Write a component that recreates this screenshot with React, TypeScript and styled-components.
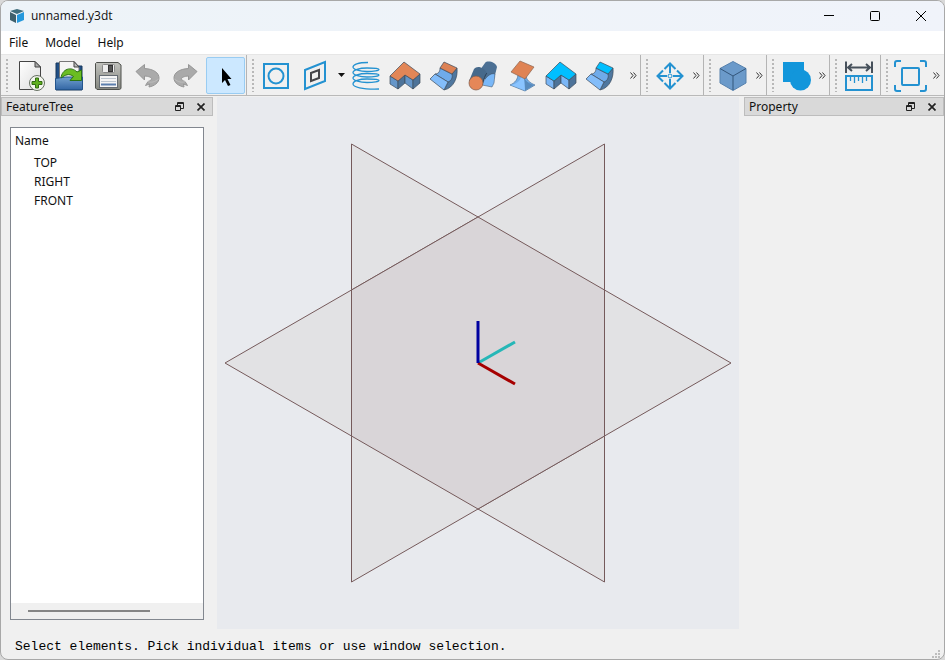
import React from "react";
import styled, { createGlobalStyle } from "styled-components";

const GlobalStyle = createGlobalStyle`
  * { box-sizing: border-box; }
  html, body { margin: 0; background: #d9d9d9; }
  body { font-family: "Noto Sans", "Open Sans", sans-serif; font-size: 12px; color: #111; }
  button { font: inherit; color: inherit; border: 0; padding: 0; background: none; }
  svg { display: block; }
`;

const Window = styled.div`
  display: flex;
  flex-direction: column;
  height: 100vh;
  min-height: 400px;
  border: 1px solid #a8a8a8;
  border-radius: 8px;
  overflow: hidden;
  background: #f0f0f0;
`;

const TitleBar = styled.header`
  display: flex;
  align-items: center;
  height: 30px;
  flex: none;
  padding-left: 8px;
  background: linear-gradient(90deg, #edf3f8, #f0f3fa);
`;

const Title = styled.h1`
  flex: 1;
  margin: 0 0 0 6px;
  font-family: "Open Sans", sans-serif;
  font-size: 12px;
  font-weight: 400;
  line-height: 30px;
`;

const CaptionButton = styled.button`
  display: grid;
  place-items: center;
  width: 46px;
  height: 30px;
`;

const MenuBar = styled.nav`
  display: flex;
  flex: none;
  height: 23px;
  gap: 17px;
  padding-left: 8px;
  background: #fff;
`;

const MenuButton = styled.button`
  font-size: 12px;
  line-height: 23px;
`;

const ToolStrip = styled.div`
  display: flex;
  flex: none;
  height: 42px;
  background: #f0f0f0;
  border-top: 1px solid #e6e6e6;
  border-bottom: 1px solid #b9b9b9;
`;

const ToolGroup = styled.div<{ $grow?: boolean; $padded?: boolean }>`
  display: flex;
  align-items: center;
  flex: ${(p) => (p.$grow ? "1 0 auto" : "none")};
  padding-right: ${(p) => (p.$padded ? "1px" : "0")};
  border-right: 1px solid #b4b4b4;
  &:last-child { border-right-color: transparent; }
`;

const Grip = styled.span`
  width: 10px;
  height: 34px;
  background: radial-gradient(circle, #b8b8b8 1px, transparent 1px) 4px 0 / 4px 4px repeat-y;
`;

const ToolButton = styled.button<{ $active?: boolean }>`
  display: grid;
  place-items: center;
  width: 39px;
  height: 37px;
  border: 1px solid ${(p) => (p.$active ? "#99ccf2" : "transparent")};
  border-radius: 2px;
  background: ${(p) => (p.$active ? "#cce8ff" : "transparent")};
`;

const DropButton = styled.button`
  display: grid;
  place-items: center;
  width: 12px;
  height: 37px;
`;

const MoreButton = styled.button`
  display: grid;
  place-items: center;
  width: 13px;
  height: 37px;
  margin-left: auto;
`;

const Workspace = styled.main`
  display: grid;
  flex: 1;
  min-height: 0;
  padding-top: 1px;
  grid-template-columns: 212px minmax(0, 1fr) 200px;
  column-gap: 4px;
`;

const Dock = styled.section`
  display: flex;
  flex-direction: column;
  min-height: 0;
`;

const DockHeader = styled.header`
  display: flex;
  align-items: center;
  height: 19px;
  flex: none;
  padding: 0 3px 0 4px;
  border: 1px solid #bdbdbd;
  background: #d9d9d9;
`;

const DockTitle = styled.h2`
  flex: 1;
  margin: 0;
  font-size: 12px;
  font-weight: 400;
  line-height: 19px;
`;

const DockButton = styled.button`
  display: grid;
  place-items: center;
  width: 17px;
  height: 17px;
  margin-left: 4px;
`;

const TreeBox = styled.div`
  display: flex;
  flex-direction: column;
  flex: 1;
  min-height: 0;
  margin: 11px 9px 9px;
  border: 1px solid #82878f;
  background: #fff;
`;

const TreeHead = styled.div`
  padding: 3px 4px;
  line-height: 19px;
`;

const TreeList = styled.ul`
  flex: 1;
  min-height: 0;
  margin: 0;
  padding: 0 0 0 23px;
  list-style: none;
  line-height: 19px;
`;

const ScrollTrack = styled.div`
  display: flex;
  align-items: center;
  height: 16px;
  padding: 0 17px;
  background: #f0f0f0;
`;

const ScrollThumb = styled.span`
  width: 77%;
  height: 2px;
  background: #868686;
`;

const Viewport = styled.div`
  min-height: 0;
  margin-right: 1px;
  background: #e8eaee;
`;

const StatusBar = styled.footer`
  display: flex;
  align-items: center;
  justify-content: space-between;
  flex: none;
  height: 30px;
  padding: 4px 3px 0 14px;
  color: #000;
  font-family: "Liberation Mono", monospace;
  font-size: 13px;
`;

const SizeGrip = styled.svg`
  align-self: flex-end;
`;

const BLUE = "#2492d1";
const EDGE = "#3c4a5a";

const Icon = ({ children }: { children: React.ReactNode }) => (
  <svg width="33" height="33" viewBox="0 0 33 33" fill="none" aria-hidden="true">
    {children}
  </svg>
);

const NewIcon = () => (
  <Icon>
    <defs>
      <linearGradient id="paper" x1="0" y1="0" x2="1" y2="1">
        <stop stopColor="#fff" /><stop offset="1" stopColor="#dcdcdc" />
      </linearGradient>
    </defs>
    <path d="M5.500 2.500H21L26.500 8V30.500H5.500Z" fill="url(#paper)" stroke="#444" />
    <path d="M21 2.500V8H26.500Z" fill="#aaa" stroke="#444" />
    <circle cx="23" cy="24" r="7.500" fill="#f3f5ef" stroke="#667062" />
    <path d="M21.500 19h3v3.500h3.500v3h-3.500v3.500h-3v-3.500h-3.500v-3h3.500z" fill="#5fb01e" stroke="#326b13" />
  </Icon>
);

const OpenIcon = () => (
  <Icon>
    <defs>
      <linearGradient id="folder" x1="0" y1="0" x2="0" y2="1">
        <stop stopColor="#72a0ce" /><stop offset="1" stopColor="#3467a5" />
      </linearGradient>
    </defs>
    <path d="M3 4h4v3h22v24H3z" fill="#204f86" stroke="#18385d" />
    <path d="M6.500 2.500H21L26 8v12H6.500z" fill="#f5f5f5" stroke="#777" />
    <path d="M21 2.500V8h5z" fill="#bbb" stroke="#444" />
    <path d="M2.500 19.500L13 18H29.500V30.500H2.500Z" fill="url(#folder)" stroke="#24558d" />
    <path d="M8 19C9 10 18 7 24 13L28.500 11V21.500H17L20.500 17.500C16 14 12 16 8 19Z" fill="#6bbd22" stroke="#2a7213" />
  </Icon>
);

const SaveIcon = () => (
  <Icon>
    <defs>
      <linearGradient id="disk" x1="0" y1="0" x2="0" y2="1">
        <stop stopColor="#c1c2bd" /><stop offset="1" stopColor="#858780" />
      </linearGradient>
    </defs>
    <path d="M4.500 3.500H26L29 6V29.500L27.500 30.500H5L3.500 29V4.500Z" fill="url(#disk)" stroke="#4e504c" />
    <rect x="10.500" y="5.500" width="12" height="8" rx="1" fill="#eee" stroke="#888" />
    <rect x="16.500" y="6.500" width="4" height="6" fill="#555" stroke="#333" />
    <rect x="7.500" y="16.500" width="18" height="12" fill="#f4f4f4" stroke="#646b72" />
    <path d="M9 19.500h15M9 22.500h15" stroke="#bcc5ce" />
    <path d="M9 25.500h15" stroke="#5b7ead" strokeWidth="2" />
  </Icon>
);

const ArrowShape = () => (
  <>
    <path
      d="M5 12.500L13.500 5.500V9.500C23 10 28 14 28 19C28 24 23 27 18 28L18.500 25L14.500 26.500L17 22.500C23 20.500 21 17.500 13.500 17V21Z"
      fill="#aaa"
      stroke="#969696"
      strokeLinejoin="round"
    />
    <path d="M17 22.500C20 24 24 23 27.500 20" stroke="#bdbdbd" />
  </>
);

const UndoIcon = () => (
  <Icon><ArrowShape /></Icon>
);

const RedoIcon = () => (
  <Icon><g transform="translate(32 0) scale(-1 1)"><ArrowShape /></g></Icon>
);

const SelectIcon = () => (
  <Icon><path d="M13 9V24L16 21L19 27L21.500 26L18.500 20H22.500Z" fill="#000" /></Icon>
);

const SketchIcon = () => (
  <Icon>
    <rect x="4" y="5" width="24" height="24" stroke={BLUE} strokeWidth="2" />
    <circle cx="16" cy="17" r="7.500" stroke={BLUE} strokeWidth="2" />
  </Icon>
);

const PlaneIcon = () => (
  <Icon>
    <path d="M6 11L26 3V22L6 30Z" stroke={BLUE} strokeWidth="2" />
    <path d="M12 14L20 11V19L12 22Z" stroke="#454549" strokeWidth="2" />
  </Icon>
);

const HelixIcon = () => (
  <Icon>
    <path
      d="M18 3.500C8 3.500 3 5.500 3 8C3 10.500 10 12.500 17 12.500C24 12.500 29 11.500 29 10.500C29 9.500 24 9 17 9C9 9 3 11 3 13.500C3 16 10 18 17 18C24 18 29 17 29 16C29 15 24 14.500 17 14.500C9 14.500 3 16.500 3 19C3 21.500 10 23.500 17 23.500C24 23.500 29 22.500 29 21.500C29 20.500 24 20 17 20C9 20 3 22 3 25C3 28 12 30.500 29 30"
      stroke={BLUE}
      strokeWidth="1.300"
    />
  </Icon>
);

const ExtrudeIcon = ({ top, face }: { top: string; face: string }) => (
  <Icon>
    <g stroke={EDGE} strokeWidth="0.700" strokeLinejoin="round">
      <path d="M1 17L9 22V30L1 25Z" fill={face} />
      <path d="M9 22L16 16V24L9 30Z" fill="#4d7399" />
      <path d="M16 16L24 21V30L16 24Z" fill={face} />
      <path d="M24 21L31 15V24L24 30Z" fill="#4d7399" />
      <path d="M1 17L15 3L31 15L24 21L16 16L9 22Z" fill={top} />
    </g>
  </Icon>
);

const RevolveIcon = ({ top }: { top: string }) => (
  <Icon>
    <g stroke={EDGE} strokeWidth="0.700" strokeLinejoin="round">
      <path d="M29 9C30 18 26 29 16 31L20 23L24 15Z" fill="#4f779f" />
      <path d="M12 9L24 15C25 19 23 22 20 23L7 15C10 15 12 13 12 9Z" fill="#6fabea" />
      <path d="M2 20L7 15L20 23L16 31Z" fill="#83bdfa" />
      <path d="M16 3L29 9L24 15L12 9Z" fill={top} />
    </g>
  </Icon>
);

const SweepIcon = () => (
  <Icon>
    <path d="M13 11L18 4C20 1 29 3 30 8L27 20H16Z" fill="#4c7094" />
    <path d="M28 15C23 13 17 20 15 26L25 28L27 24Z" fill="#7ab8f8" stroke={EDGE} strokeWidth="0.500" />
    <path d="M2 22L7 10C10 6 17 8 20 14L15 26Z" fill="#46698b" />
    <path d="M20 14C18 16 17 20 15 26" stroke="#2c4258" />
    <circle cx="9" cy="24" r="7" fill="#e58758" stroke="#7c5a4a" strokeWidth="0.700" />
  </Icon>
);

const LoftIcon = () => (
  <Icon>
    <path d="M12 15C12 20 9 24 4 26L19 32L29 26C24 24 20 21 20 16Z" fill="#72aeea" stroke="#4d7399" strokeWidth="0.700" />
    <path d="M18 18C20 23 24 25 28 26L19 31.500Z" fill="#588bbd" />
    <path d="M15 17C15 22 10 25 5 26L19 31.500L18 19Z" fill="#8ac4ff" />
    <path d="M14 2L28 8L19 20L5 13Z" fill="#df8354" stroke="#8b6450" strokeWidth="0.700" />
  </Icon>
);

const MoveIcon = () => (
  <Icon>
    <path
      d="M16 5V14M16 20V29M4 17H13M19 17H28M10.500 10L16 4.500L21.500 10M10.500 24L16 29.500L21.500 24M9 11.500L3.500 17L9 22.500M23 11.500L28.500 17L23 22.500"
      stroke={BLUE}
      strokeWidth="2"
    />
    <circle cx="16" cy="17" r="2" stroke={BLUE} />
  </Icon>
);

const CubeIcon = () => (
  <Icon>
    <path d="M16 2.500L29 9.500V24L16 31.500L3 24V9.500Z" fill="#6b9aca" stroke="#5681ad" />
    <path d="M3 9.500L16 17L29 9.500M16 17V31" stroke="#33567b" />
  </Icon>
);

const BooleanIcon = () => (
  <Icon>
    <rect x="3" y="3" width="21" height="20" fill="#1296db" />
    <circle cx="20.500" cy="21" r="10.500" fill="#1296db" />
  </Icon>
);

const MeasureIcon = () => (
  <Icon>
    <path d="M3 2.500V14M29 2.500V14M5 8.500H27M9 5L5 8.500L9 12M23 5L27 8.500L23 12" stroke="#46505b" strokeWidth="2" />
    <rect x="3" y="17" width="26" height="14" stroke={BLUE} strokeWidth="2" />
    <path d="M7.500 17V22M11.500 17V24M15.500 17V22M19.500 17V24M23.500 17V22" stroke={BLUE} strokeWidth="1.300" />
  </Icon>
);

const FitIcon = () => (
  <Icon>
    <rect x="8" y="9" width="17" height="17" rx="1" stroke={BLUE} strokeWidth="2" />
    <path
      d="M1 8V4Q1 2 3 2H7M26 2H30Q32 2 32 4V8M32 26V30Q32 32 30 32H26M7 32H3Q1 32 1 30V26"
      stroke={BLUE}
      strokeWidth="2"
    />
  </Icon>
);

const More = () => (
  <MoreButton aria-label="More tools">
    <svg width="7" height="7" viewBox="0 0 7 7" fill="none" stroke="#333" aria-hidden="true">
      <path d="M0.500 0.500L3 3.500L0.500 6.500M3.500 0.500L6 3.500L3.500 6.500" />
    </svg>
  </MoreButton>
);

const Tool = ({ label, active, children }: { label: string; active?: boolean; children: React.ReactNode }) => (
  <ToolButton aria-label={label} aria-pressed={active} $active={active}>{children}</ToolButton>
);

const DockCaption = ({ title }: { title: string }) => (
  <DockHeader>
    <DockTitle>{title}</DockTitle>
    <DockButton aria-label={`Float ${title}`}>
      <svg width="9" height="9" viewBox="0 0 9 9" fill="none" stroke="#222" aria-hidden="true">
        <path d="M2.500 3V0.500H8.500V6.500H6M2.500 1.500H8.500M0.500 3.500H5.500V8.500H0.500ZM0.500 4.500H5.500" />
      </svg>
    </DockButton>
    <DockButton aria-label={`Close ${title}`}>
      <svg width="8" height="8" viewBox="0 0 8 8" stroke="#222" strokeWidth="1.700" aria-hidden="true">
        <path d="M0.500 0.500L7.500 7.500M7.500 0.500L0.500 7.500" />
      </svg>
    </DockButton>
  </DockHeader>
);

const Scene = () => (
  <svg width="100%" height="100%" viewBox="0 0 522 532" fill="none" role="img" aria-label="Datum planes and axes">
    <g fill="#e2e2e4" stroke="#755a5b" strokeWidth="1">
      <path d="M8 266L261 120L514 266L261 412Z" />
      <path d="M134.500 47L387.500 193V485L134.500 339Z" />
      <path d="M387.500 47L134.500 193V485L387.500 339Z" />
    </g>
    <path d="M134.500 193L261 120L387.500 193V339L261 412L134.500 339Z" fill="#d9d5d8" stroke="#755a5b" />
    <g strokeWidth="3">
      <path d="M261 266L298 245" stroke="#26b7b7" />
      <path d="M261 266L298 287" stroke="#a60000" />
      <path d="M261 266V224" stroke="#0000a0" />
    </g>
  </svg>
);

export default function App() {
  return (
    <>
      <GlobalStyle />
      <Window>
        <TitleBar>
          <svg width="16" height="16" viewBox="0 0 16 16" aria-hidden="true">
            <path d="M8 1L15 3L8 6L1 3Z" fill="#3f6d7c" />
            <path d="M1 4L7 7V15L1 12Z" fill="#3f606c" />
            <path d="M8 7L15 4V12L8 15Z" fill="#2598dc" />
          </svg>
          <Title>unnamed.y3dt</Title>
          <CaptionButton aria-label="Minimize">
            <svg width="10" height="10" viewBox="0 0 10 10" stroke="#000"><path d="M0 4.500H10" /></svg>
          </CaptionButton>
          <CaptionButton aria-label="Maximize">
            <svg width="10" height="10" viewBox="0 0 10 10" fill="none" stroke="#000"><rect x="0.500" y="0.500" width="9" height="9" rx="1" /></svg>
          </CaptionButton>
          <CaptionButton aria-label="Close">
            <svg width="10" height="10" viewBox="0 0 10 10" stroke="#000"><path d="M0 0L10 10M10 0L0 10" /></svg>
          </CaptionButton>
        </TitleBar>
        <MenuBar>
          {["File", "Model", "Help"].map((m) => <MenuButton key={m}>{m}</MenuButton>)}
        </MenuBar>
        <ToolStrip role="toolbar">
          <ToolGroup $padded>
            <Grip />
            <Tool label="New"><NewIcon /></Tool>
            <Tool label="Open"><OpenIcon /></Tool>
            <Tool label="Save"><SaveIcon /></Tool>
            <Tool label="Undo"><UndoIcon /></Tool>
            <Tool label="Redo"><RedoIcon /></Tool>
            <Tool label="Select" active><SelectIcon /></Tool>
          </ToolGroup>
          <ToolGroup $grow>
            <Grip />
            <Tool label="Sketch"><SketchIcon /></Tool>
            <Tool label="Plane"><PlaneIcon /></Tool>
            <DropButton aria-label="Plane options">
              <svg width="7" height="4" viewBox="0 0 7 4" aria-hidden="true"><path d="M0 0H7L3.500 4Z" fill="#111" /></svg>
            </DropButton>
            <Tool label="Helix"><HelixIcon /></Tool>
            <Tool label="Extrude"><ExtrudeIcon top="#e28657" face="#6596c9" /></Tool>
            <Tool label="Revolve"><RevolveIcon top="#dc8154" /></Tool>
            <Tool label="Sweep"><SweepIcon /></Tool>
            <Tool label="Loft"><LoftIcon /></Tool>
            <Tool label="Extrude cut"><ExtrudeIcon top="#00bfff" face="#7ab6f6" /></Tool>
            <Tool label="Revolve cut"><RevolveIcon top="#00bfff" /></Tool>
            <More />
          </ToolGroup>
          <ToolGroup><Grip /><Tool label="Move"><MoveIcon /></Tool><More /></ToolGroup>
          <ToolGroup><Grip /><Tool label="View"><CubeIcon /></Tool><More /></ToolGroup>
          <ToolGroup><Grip /><Tool label="Union"><BooleanIcon /></Tool><More /></ToolGroup>
          <ToolGroup $padded><Grip /><Tool label="Measure"><MeasureIcon /></Tool></ToolGroup>
          <ToolGroup><Grip /><Tool label="Fit"><FitIcon /></Tool><More /></ToolGroup>
        </ToolStrip>
        <Workspace>
          <Dock>
            <DockCaption title="FeatureTree" />
            <TreeBox>
              <TreeHead>Name</TreeHead>
              <TreeList>
                <li>TOP</li>
                <li>RIGHT</li>
                <li>FRONT</li>
              </TreeList>
              <ScrollTrack><ScrollThumb /></ScrollTrack>
            </TreeBox>
          </Dock>
          <Viewport><Scene /></Viewport>
          <Dock>
            <DockCaption title="Property" />
          </Dock>
        </Workspace>
        <StatusBar>
          <span>Select elements. Pick individual items or use window selection.</span>
          <SizeGrip width="9" height="9" viewBox="0 0 9 9" fill="#bdbdbd" aria-hidden="true">
            <path d="M6 0h2v2H6zM3 3h2v2H3zM6 3h2v2H6zM0 6h2v2H0zM3 6h2v2H3zM6 6h2v2H6z" />
          </SizeGrip>
        </StatusBar>
      </Window>
    </>
  );
}
